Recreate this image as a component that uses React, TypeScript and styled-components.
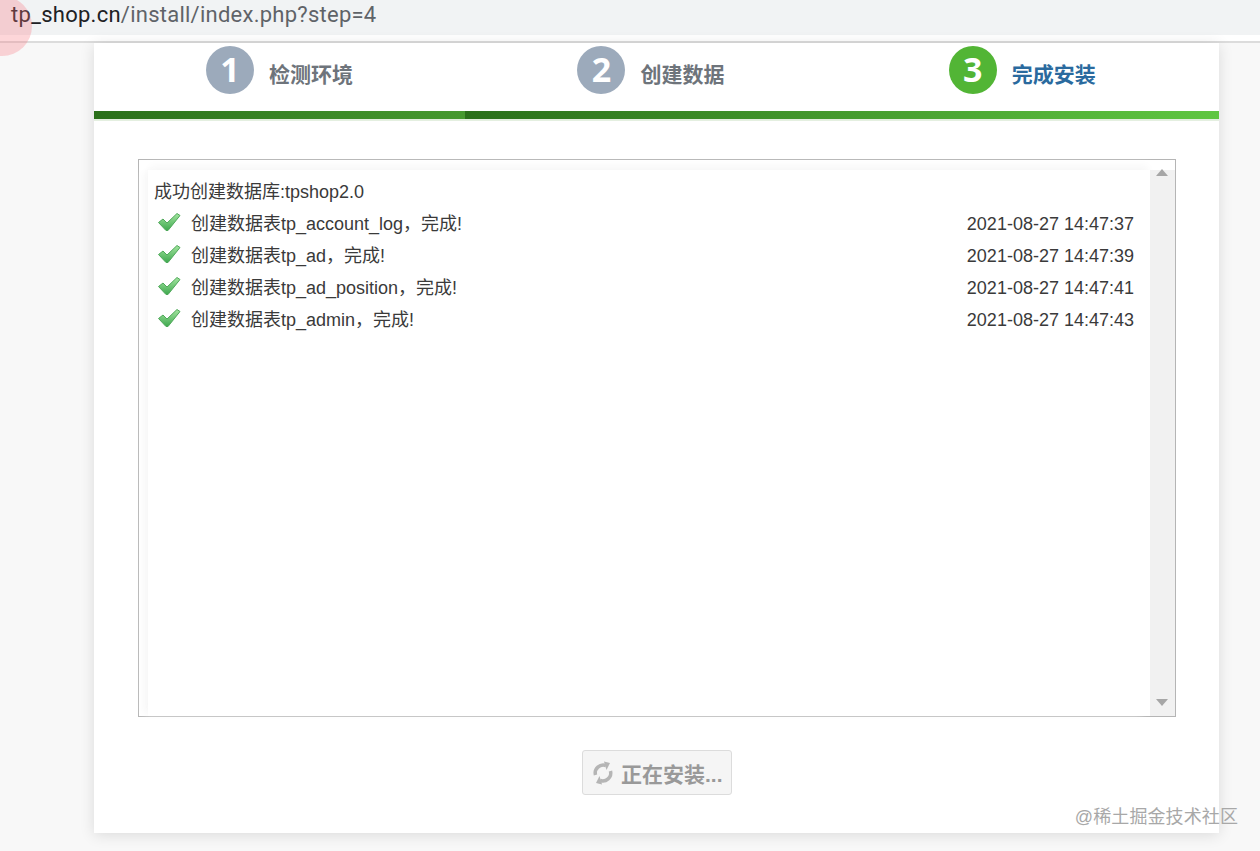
import React from "react";
import styled, { createGlobalStyle } from "styled-components";

const GlobalStyle = createGlobalStyle`
  html, body {
    margin: 0;
    padding: 0;
    height: 100%;
    background: #f8f8f8;
    overflow: hidden;
  }
  * {
    box-sizing: border-box;
  }
`;

const Page = styled.div`
  position: relative;
  width: 1260px;
  height: 851px;
  overflow: hidden;
  background: #f8f8f8;
  font-family: "Liberation Sans", "Noto Sans CJK SC", sans-serif;
`;

const AddressBar = styled.div`
  height: 35px;
  padding: 0 0 0 11px;
  background: #f1f3f4;
  font-family: Roboto, "Liberation Sans", sans-serif;
  font-size: 22px;
  line-height: 29px;
  letter-spacing: 0.25px;
  color: #5f6368;
`;

const Host = styled.span`
  color: #202124;
`;

const ClickMark = styled.div`
  position: absolute;
  left: -28px;
  top: -4px;
  width: 60px;
  height: 60px;
  border-radius: 50%;
  background: rgba(250, 120, 130, 0.3);
`;

const TopGap = styled.div`
  height: 8px;
  background: #fff;
  border-bottom: 2px solid #dcdcdc;
`;

const Card = styled.div`
  width: 1125px;
  height: 790px;
  margin-left: 94px;
  background: #fff;
  box-shadow: 0 2px 14px rgba(0, 0, 0, 0.12);
`;

const Steps = styled.div`
  display: flex;
  height: 68px;
`;

const Step = styled.div`
  display: flex;
  align-items: flex-start;
  width: 371.4px;
  padding: 3px 0 0 112px;
`;

const StepNumber = styled.div<{ $active?: boolean }>`
  width: 48px;
  height: 48px;
  border-radius: 50%;
  background: ${(p) => (p.$active ? "#52b535" : "#9caabb")};
  color: #fff;
  font-family: "Open Sans", sans-serif;
  font-weight: 700;
  font-size: 34px;
  line-height: 46px;
  text-align: center;
`;

const StepLabel = styled.div<{ $active?: boolean }>`
  margin: 15px 0 0 15px;
  font-size: 21px;
  line-height: 28px;
  font-weight: 700;
  color: ${(p) => (p.$active ? "#2a6a9e" : "#6e747b")};
`;

const ProgressBar = styled.div`
  display: flex;
  height: 10px;
  border-bottom: 2px solid #e4efe0;
`;

const DoneSegment = styled.div`
  width: 371px;
  background: linear-gradient(90deg, #2a6f1a, #46992f);
`;

const ActiveSegment = styled.div`
  flex: 1;
  background: linear-gradient(90deg, #2a6f1a, #5fc641);
`;

const LogBox = styled.div`
  display: flex;
  height: 558px;
  margin: 38px 43px 0 44px;
  border: 1px solid #b5b5b5;
`;

const LogContent = styled.div`
  flex: 1;
  margin: 10px 0 0 9px;
  padding: 6px 16px 0 6px;
  background: #fff;
  box-shadow: 0 -6px 8px -2px #f7f7f7, -6px 0 8px -2px #f7f7f7;
  font-size: 18px;
  line-height: 32px;
  color: #3a3a3a;
`;

const LogRow = styled.div`
  display: flex;
  align-items: center;
  height: 32px;
`;

const CheckIcon = styled.svg`
  width: 24px;
  height: 22px;
  margin: -3px 0 0 3px;
  flex: none;
`;

const LogText = styled.span`
  flex: 1;
  margin-left: 10px;
`;

const Scrollbar = styled.div`
  position: relative;
  width: 25px;
  margin-top: 10px;
  background: #f1f1f1;
`;

const ScrollArrow = styled.div<{ $down?: boolean }>`
  position: absolute;
  left: 6px;
  ${(p) => (p.$down ? "bottom: 10px;" : "top: -1px;")}
  width: 0;
  height: 0;
  border-left: 6px solid transparent;
  border-right: 6px solid transparent;
  ${(p) => (p.$down ? "border-top: 7px solid #a6a6a6;" : "border-bottom: 7px solid #a6a6a6;")}
`;

const Footer = styled.div`
  display: flex;
  justify-content: center;
  padding: 33px 0 0 1px;
`;

const InstallButton = styled.div`
  display: flex;
  align-items: center;
  width: 150px;
  height: 45px;
  padding-left: 9px;
  background: #f5f5f5;
  border: 1px solid #dcdcdc;
  border-radius: 3px;
  color: #999;
  font-size: 21px;
  font-weight: 700;
  white-space: nowrap;
`;

const SpinIcon = styled.svg`
  width: 22px;
  height: 26px;
  margin-right: 7px;
  flex: none;
`;

const Watermark = styled.div`
  position: absolute;
  right: 22px;
  top: 805px;
  font-size: 18px;
  line-height: 24px;
  color: #a8a8a8;
  letter-spacing: 0.1px;
`;

const logRows = [
  { text: "创建数据表tp_account_log\uFF0C完成!", time: "2021-08-27 14:47:37" },
  { text: "创建数据表tp_ad\uFF0C完成!", time: "2021-08-27 14:47:39" },
  { text: "创建数据表tp_ad_position\uFF0C完成!", time: "2021-08-27 14:47:41" },
  { text: "创建数据表tp_admin\uFF0C完成!", time: "2021-08-27 14:47:43" },
];

const Check = () => (
  <CheckIcon viewBox="0 0 24 22">
    <defs>
      <linearGradient id="chk" x1="0" y1="0" x2="0" y2="1">
        <stop offset="0" stopColor="#a4e6a0" />
        <stop offset="1" stopColor="#3fa84f" />
      </linearGradient>
    </defs>
    <path
      d="M1.5 10.5 L6 7 L10 11 L20 1.5 L23 3.5 L11 18.5 L9 18.5 Z"
      fill="url(#chk)"
      stroke="#4fa85a"
      strokeWidth="1"
      strokeLinejoin="round"
    />
  </CheckIcon>
);

const App: React.FC = () => (
  <Page>
    <GlobalStyle />
    <AddressBar>
      <Host>tp_shop.cn</Host>/install/index.php?step=4
    </AddressBar>
    <ClickMark />
    <TopGap />
    <Card>
      <Steps>
        <Step>
          <StepNumber>1</StepNumber>
          <StepLabel>检测环境</StepLabel>
        </Step>
        <Step>
          <StepNumber>2</StepNumber>
          <StepLabel>创建数据</StepLabel>
        </Step>
        <Step>
          <StepNumber $active>3</StepNumber>
          <StepLabel $active>完成安装</StepLabel>
        </Step>
      </Steps>
      <ProgressBar>
        <DoneSegment />
        <ActiveSegment />
      </ProgressBar>
      <LogBox>
        <LogContent>
          <div>成功创建数据库:tpshop2.0</div>
          {logRows.map((row) => (
            <LogRow key={row.time}>
              <Check />
              <LogText>{row.text}</LogText>
              <span>{row.time}</span>
            </LogRow>
          ))}
        </LogContent>
        <Scrollbar>
          <ScrollArrow />
          <ScrollArrow $down />
        </Scrollbar>
      </LogBox>
      <Footer>
        <InstallButton>
          <SpinIcon viewBox="0 0 22 26" fill="none" stroke="#b5b5b5" strokeWidth="3.5">
            <path d="M3.5 15 A8 8 0 0 1 14 5.5" />
            <path d="M18.5 11 A8 8 0 0 1 8 20.5" />
            <path d="M12 1.5 L18 3 L14.5 10 Z" fill="#b5b5b5" stroke="none" />
            <path d="M10 24.5 L4 23 L7.5 16 Z" fill="#b5b5b5" stroke="none" />
          </SpinIcon>
          正在安装...
        </InstallButton>
      </Footer>
    </Card>
    <Watermark>@稀土掘金技术社区</Watermark>
  </Page>
);

export default App;
